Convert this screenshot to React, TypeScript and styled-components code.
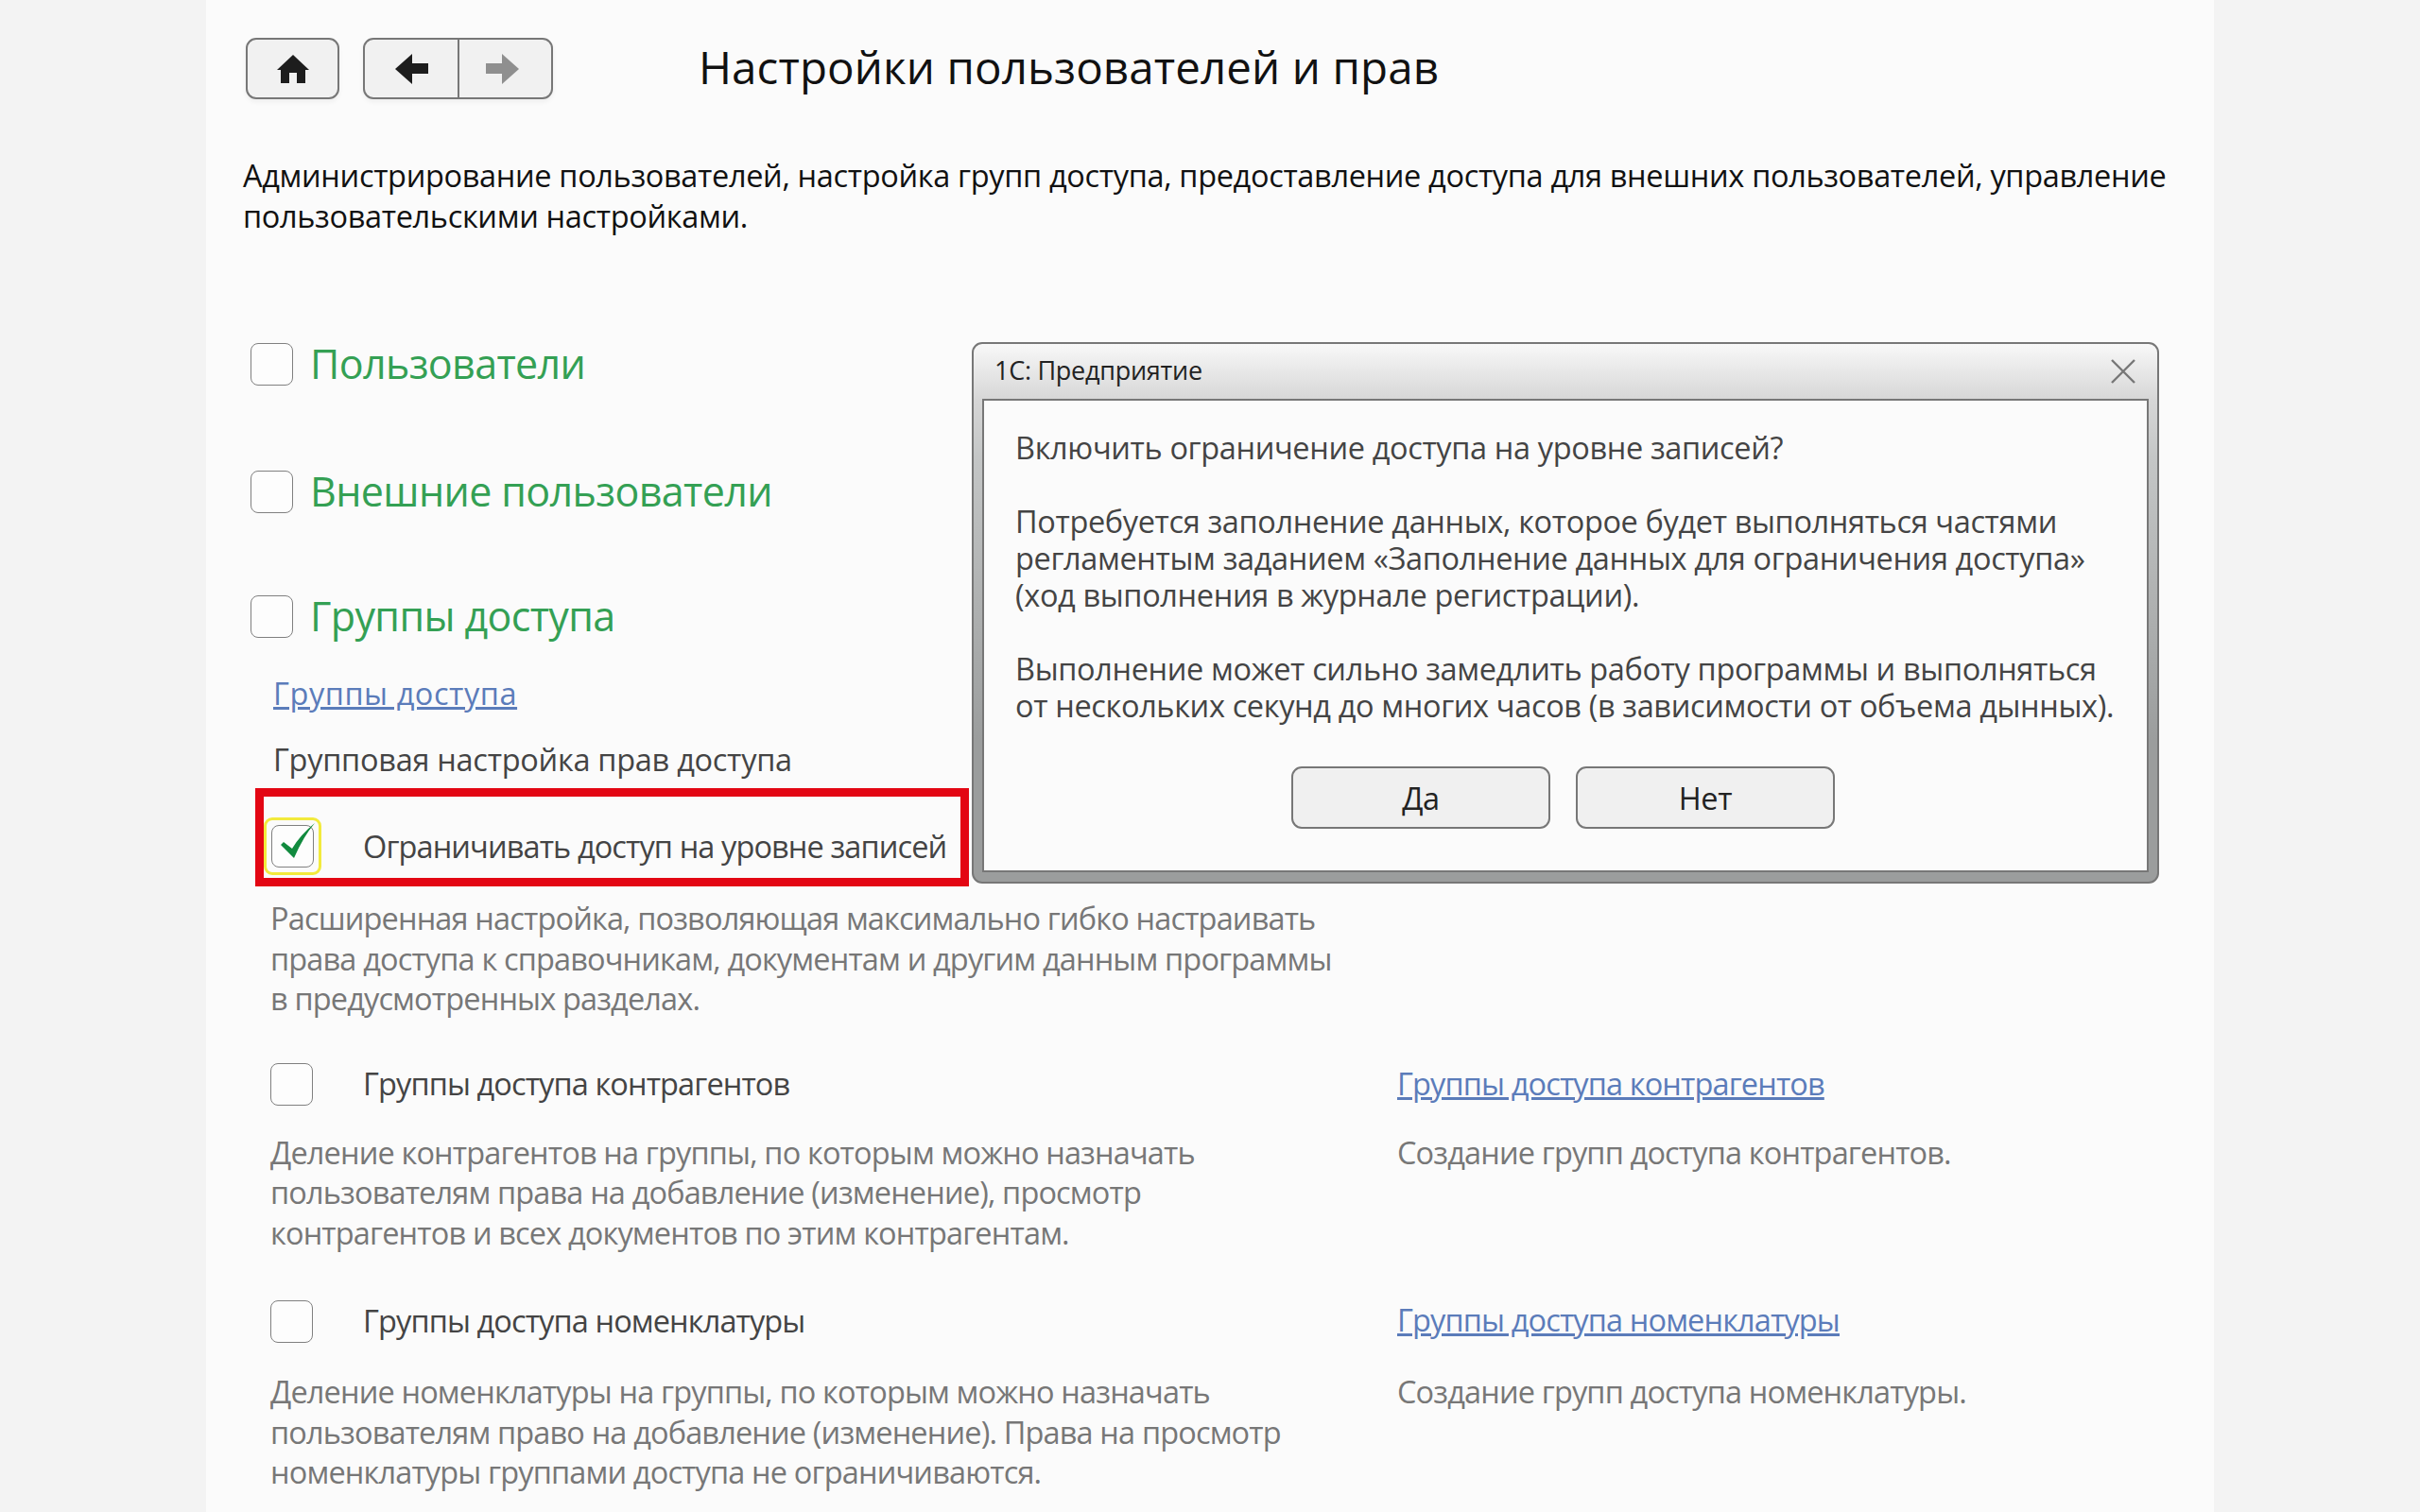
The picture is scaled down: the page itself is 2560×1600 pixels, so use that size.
import React from "react";
import styled, { createGlobalStyle } from "styled-components";

const Global = createGlobalStyle`
  html, body { margin: 0; padding: 0; background: #f3f3f3; }
  body { font-family: "Open Sans", "Noto Sans", sans-serif; }
  #root { width: 2560px; height: 1600px; overflow: hidden; }
`;
const Page = styled.div`
  width: 2560px; height: 1600px; background: #f3f3f3; overflow: hidden;
`;
const Panel = styled.main`
  position: relative; width: 2124px; height: 1600px; margin-left: 218px;
  background: #fbfbfb; box-sizing: border-box; padding: 40px 0 0 39px;
`;
const Toolbar = styled.div`
  display: flex; align-items: center; height: 65px; padding-left: 3px;
`;
const ToolGroup = styled.div`
  display: flex; height: 65px; box-sizing: border-box; margin-right: 25px;
  background: #f1f1f1; border: 2px solid #777; border-radius: 11px;
  box-shadow: 0 3px 5px rgba(0,0,0,.05);
`;
const ToolButton = styled.button<{ $divider?: boolean; $w: number }>`
  width: ${p => p.$w}px; height: 100%; padding: 0 ${p => (p.$divider ? 7 : 0)}px 0 0; display: flex; align-items: center; justify-content: center;
  background: transparent; border: 0; border-left: ${p => (p.$divider ? "2px solid #777" : "0")};
`;
const Title = styled.h1`
  margin: 0 0 5px 129px; font-size: 47.5px; line-height: 65px; font-weight: 400; color: #111; letter-spacing: .1px; white-space: nowrap;
`;
const Intro = styled.p`
  width: 2060px; margin: 59px 0 0; font-size: 32.5px; line-height: 43px; color: #111; letter-spacing: -.34px;
`;
const SectionHead = styled.div<{ $mt: number }>`
  display: flex; align-items: center; height: 46px; margin: ${p => p.$mt}px 0 0 8px;
`;
const Box = styled.span`
  display: block; width: 45px; height: 45px; box-sizing: border-box; flex: none;
  background: #fdfdfd; border: 1.5px solid #808080; border-radius: 8px;
`;
const RowBox = styled(Box)`
  margin-top: 2px;
`;
const SectionTitle = styled.h2`
  margin: 0 0 0 18px; font-size: 43px; line-height: 46px; font-weight: 400; color: #34a054; letter-spacing: -.62px;
`;
const IndentLink = styled.a`
  display: block; margin: 37px 0 0 32px; font-size: 32.5px; line-height: 43px; color: #5b7cba; text-decoration: underline; letter-spacing: .55px;
`;
const PlainLabel = styled.div`
  margin: 27px 0 0 32px; font-size: 32.5px; line-height: 43px; color: #444; letter-spacing: -.28px;
`;
const Highlight = styled.div`
  display: flex; align-items: center; box-sizing: border-box; width: 755px; height: 104px; margin: 9px 0 0 13px;
  border: 9px solid #e30613; padding: 20px 0 2px;
`;
const FocusRing = styled.span`
  display: flex; flex: none; align-items: center; justify-content: center; width: 61px; height: 61px; box-sizing: border-box; position: relative;
  border: 3px solid #f2ea3c; border-radius: 9px; margin-right: 44px;
`;
const Tick = styled.svg`
  position: absolute; left: 14px; top: 3px; width: 38px; height: 38px;
`;
const OptionLabel = styled.span`
  font-size: 32.5px; line-height: 43px; color: #444; letter-spacing: -.89px; white-space: nowrap;
`;
const Help = styled.p`
  margin: 0; font-size: 32.5px; line-height: 42.5px; color: #777; letter-spacing: -.85px; white-space: pre-line;
`;
const OptionGrid = styled.section<{ $mt: number }>`
  display: grid; grid-template-columns: 1192px 1fr; margin: ${p => p.$mt}px 0 0 29px;
`;
const OptionHead = styled.div`
  display: flex; align-items: center; height: 46px; gap: 53px;
`;
const SideLink = styled.a`
  font-size: 32.5px; line-height: 46px; color: #5b7cba; text-decoration: underline; letter-spacing: -.87px; white-space: nowrap;
`;
const DescBlock = styled.div<{ $mt: number }>`
  margin-top: ${p => p.$mt}px;
`;
const Dialog = styled.div`
  position: absolute; left: 810px; top: 362px; width: 1256px; height: 573px; box-sizing: border-box;
  display: flex; flex-direction: column;
  border: 2px solid #777; border-radius: 11px;
  background: linear-gradient(#f8f8f8 0, #d6d6d6 60px, #c4c6c6 120px, #9b9d9d 420px);
`;
const DialogBar = styled.div`
  display: flex; align-items: center; justify-content: space-between; height: 58px; flex: none; padding: 0 23px 0 22px;
`;
const DialogTitle = styled.span`
  margin-bottom: 3px; font-size: 27px; color: #222; letter-spacing: -.27px; white-space: nowrap;
`;
const DialogBody = styled.div`
  flex: 1; margin: 0 9px 10px; background: #fbfbfb; border: 2px solid #777; padding: 30px 0 0 33px;
  display: flex; flex-direction: column; align-items: flex-start;
`;
const DialogText = styled.p<{ $mb: number }>`
  margin: 0 0 ${p => p.$mb}px; font-size: 32.5px; line-height: 39px; color: #444; letter-spacing: -.36px; white-space: pre-line;
`;
const DialogActions = styled.div`
  display: flex; gap: 27px; margin: 45px 0 0 292px;
`;
const DialogButton = styled.button`
  width: 274px; height: 66px; box-sizing: border-box; padding: 0; background: #f0f0f0; border: 2px solid #777; border-radius: 11px;
  font-family: inherit; font-size: 32.5px; color: #222; letter-spacing: -.3px;
`;

const Home = () => (
  <svg width="34" height="30" viewBox="0 0 34 30"><path d="M17 0 34 16h-4v14H21V19h-8v11H4V16H0z" fill="#1d1d1d" /></svg>
);
const Arrow = ({ dir, color }: { dir: "l" | "r"; color: string }) => (
  <svg width="35" height="32" viewBox="0 0 35 32" style={{ transform: dir === "r" ? "scaleX(-1)" : undefined }}>
    <path d="M0 16 18 0v10h17v11H18v11z" fill={color} />
  </svg>
);
const Close = () => (
  <svg width="26" height="26" viewBox="0 0 26 26"><path d="M1 1 25 25M25 1 1 25" stroke="#777" strokeWidth="2.4" fill="none" /></svg>
);

export default function App() {
  return (
    <Page>
      <Global />
      <Panel>
        <Toolbar>
          <ToolGroup><ToolButton $w={95}><Home /></ToolButton></ToolGroup>
          <ToolGroup>
            <ToolButton $w={98}><Arrow dir="l" color="#1d1d1d" /></ToolButton>
            <ToolButton $w={99} $divider><Arrow dir="r" color="#8f8f8f" /></ToolButton>
          </ToolGroup>
          <Title>Настройки пользователей и прав</Title>
        </Toolbar>
        <Intro>Администрирование пользователей, настройка групп доступа, предоставление доступа для внешних пользователей, управление пользовательскими настройками.</Intro>

        <SectionHead $mt={112}><Box /><SectionTitle>Пользователи</SectionTitle></SectionHead>
        <SectionHead $mt={89}><Box /><SectionTitle>Внешние пользователи</SectionTitle></SectionHead>
        <SectionHead $mt={86}><Box /><SectionTitle>Группы доступа</SectionTitle></SectionHead>
        <IndentLink>Группы доступа</IndentLink>
        <PlainLabel>Групповая настройка прав доступа</PlainLabel>
        <Highlight>
          <FocusRing>
            <Box />
            <Tick viewBox="0 0 38 38"><path d="M1 23 4 20 13 27Q22 12 37 0 25 14 15 37Z" fill="#118a3e" /></Tick>
          </FocusRing>
          <OptionLabel>Ограничивать доступ на уровне записей</OptionLabel>
        </Highlight>
        <OptionGrid $mt={13}>
          <Help>{"Расширенная настройка, позволяющая максимально гибко настраивать\nправа доступа к справочникам, документам и другим данным программы\nв предусмотренных разделах."}</Help>
          <span />
        </OptionGrid>
        <OptionGrid $mt={45}>
          <OptionHead><RowBox /><OptionLabel>Группы доступа контрагентов</OptionLabel></OptionHead>
          <OptionHead><SideLink>Группы доступа контрагентов</SideLink></OptionHead>
          <DescBlock $mt={29}><Help>{"Деление контрагентов на группы, по которым можно назначать\nпользователям права на добавление (изменение), просмотр\nконтрагентов и всех документов по этим контрагентам."}</Help></DescBlock>
          <DescBlock $mt={29}><Help>Создание групп доступа контрагентов.</Help></DescBlock>
        </OptionGrid>
        <OptionGrid $mt={48}>
          <OptionHead><RowBox /><OptionLabel>Группы доступа номенклатуры</OptionLabel></OptionHead>
          <OptionHead><SideLink>Группы доступа номенклатуры</SideLink></OptionHead>
          <DescBlock $mt={32}><Help>{"Деление номенклатуры на группы, по которым можно назначать\nпользователям право на добавление (изменение). Права на просмотр\nноменклатуры группами доступа не ограничиваются."}</Help></DescBlock>
          <DescBlock $mt={32}><Help>Создание групп доступа номенклатуры.</Help></DescBlock>
        </OptionGrid>

        <Dialog>
          <DialogBar><DialogTitle>1С: Предприятие</DialogTitle><Close /></DialogBar>
          <DialogBody>
            <DialogText $mb={39}>Включить ограничение доступа на уровне записей?</DialogText>
            <DialogText $mb={39}>{"Потребуется заполнение данных, которое будет выполняться частями\nрегламентым заданием «Заполнение данных для ограничения доступа»\n(ход выполнения в журнале регистрации)."}</DialogText>
            <DialogText $mb={0}>{"Выполнение может сильно замедлить работу программы и выполняться\nот нескольких секунд до многих часов (в зависимости от объема дынных)."}</DialogText>
            <DialogActions>
              <DialogButton>Да</DialogButton>
              <DialogButton>Нет</DialogButton>
            </DialogActions>
          </DialogBody>
        </Dialog>
      </Panel>
    </Page>
  );
}
